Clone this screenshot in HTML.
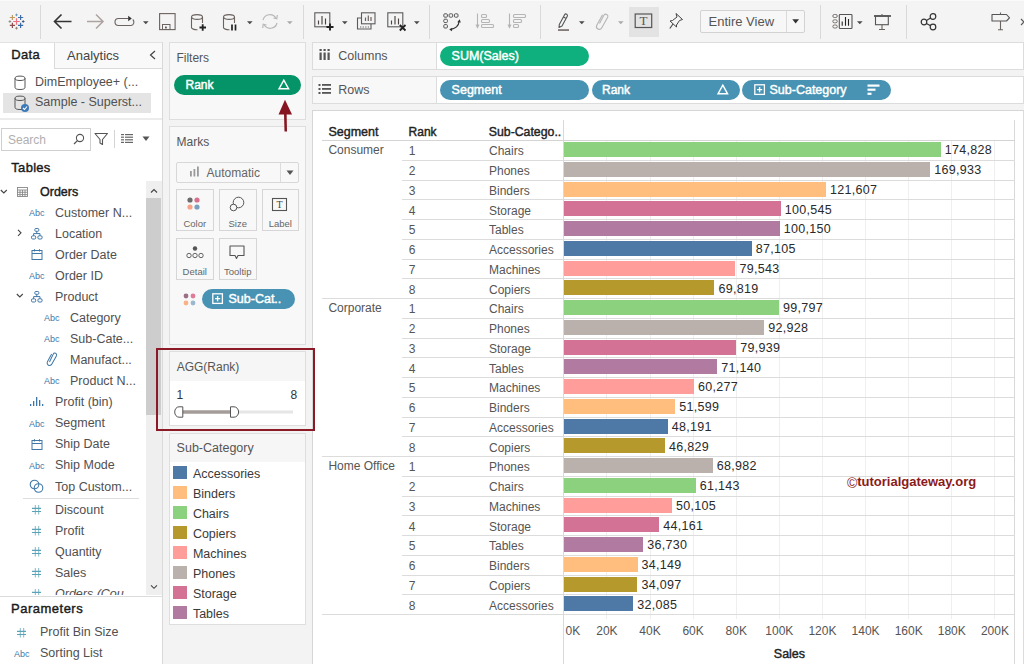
<!DOCTYPE html>
<html><head><meta charset="utf-8"><style>
html,body{margin:0;padding:0;}
body{width:1024px;height:664px;overflow:hidden;position:relative;background:#f3f3f3;font-family:"Liberation Sans", sans-serif;}
.t{position:absolute;white-space:nowrap;line-height:1;}
.b{position:absolute;box-sizing:border-box;}
svg.b{overflow:visible;}
</style></head><body>
<div class="b" style="left:0px;top:0px;width:1024px;height:42px;background:#f4f4f4;"></div>
<div class="b" style="left:0px;top:0px;width:1024px;height:1px;background:#fafafa;"></div>
<div class="b" style="left:40px;top:5px;width:1px;height:34px;background:#d9d9d9;"></div>
<div class="b" style="left:303px;top:5px;width:1px;height:34px;background:#d9d9d9;"></div>
<div class="b" style="left:429px;top:5px;width:1px;height:34px;background:#d9d9d9;"></div>
<div class="b" style="left:540px;top:5px;width:1px;height:34px;background:#d9d9d9;"></div>
<div class="b" style="left:820px;top:5px;width:1px;height:34px;background:#d9d9d9;"></div>
<div class="b" style="left:906px;top:5px;width:1px;height:34px;background:#d9d9d9;"></div>
<svg class="b" style="left:0px;top:0px;" width="34" height="42" viewBox="0 0 34 42"><path d="M13.2 21.5 H19.8 M16.5 18.2 V24.8" stroke="#ee6f7f" stroke-width="1.2"/><path d="M9.8 17.5 H15.0 M12.4 14.9 V20.1" stroke="#bf9a62" stroke-width="1.2"/><path d="M18.0 17.5 H23.200000000000003 M20.6 14.9 V20.1" stroke="#3f6fa3" stroke-width="1.2"/><path d="M9.8 25.4 H15.0 M12.4 22.799999999999997 V28.0" stroke="#8d4e4a" stroke-width="1.2"/><path d="M18.0 25.4 H23.200000000000003 M20.6 22.799999999999997 V28.0" stroke="#3a6aa5" stroke-width="1.2"/><path d="M15.2 14.9 H17.8 M16.5 13.6 V16.2" stroke="#6f9fc0" stroke-width="1"/><path d="M15.2 28.2 H17.8 M16.5 26.9 V29.5" stroke="#8f8580" stroke-width="1"/><path d="M8.6 21.5 H11.200000000000001 M9.9 20.2 V22.8" stroke="#8f8a88" stroke-width="1"/><path d="M21.9 21.5 H24.5 M23.2 20.2 V22.8" stroke="#3f5a80" stroke-width="1"/></svg>
<svg class="b" style="left:52px;top:12px;" width="22" height="19" viewBox="0 0 22 19"><path d="M19.5 9.5 H3 M9.5 2.5 L2.5 9.5 L9.5 16.5" fill="none" stroke="#333" stroke-width="1.6"/></svg>
<svg class="b" style="left:85px;top:12px;" width="22" height="19" viewBox="0 0 22 19"><path d="M2 9.5 H17.5 M11 2.5 L18 9.5 L11 16.5" fill="none" stroke="#aca3a0" stroke-width="1.5"/></svg>
<svg class="b" style="left:113px;top:14px;" width="24" height="13" viewBox="0 0 24 13"><path d="M15.5 4.5 H5.5 a3.5 3.5 0 0 0 0 7 H18 a3.5 3.5 0 0 0 1.8 -6" fill="none" stroke="#6b6360" stroke-width="1.1"/><path d="M15.2 1.8 L18.8 4.5 L15.2 7.2 Z" fill="#333"/></svg>
<svg class="b" style="left:143px;top:20.5px;" width="7" height="5" viewBox="0 0 7 5"><path d="M0 0.3 H5.6 L2.8 3.3 Z" fill="#4a4a4a"/></svg>
<svg class="b" style="left:158px;top:12px;" width="20" height="20" viewBox="0 0 20 20"><rect x="1.6" y="1.6" width="15.5" height="16" fill="none" stroke="#6b6360" stroke-width="1.1"/><rect x="4.5" y="12.5" width="7.5" height="5" fill="none" stroke="#6b6360" stroke-width="1"/><rect x="7" y="14.6" width="1.8" height="1.8" fill="#555"/></svg>
<svg class="b" style="left:190px;top:13px;" width="18" height="19" viewBox="0 0 18 19"><path d="M1.5 4 V14.5 a5.5 2.2 0 0 0 6 2.2" fill="none" stroke="#6b6360" stroke-width="1.1"/><path d="M12.5 4 V10" fill="none" stroke="#6b6360" stroke-width="1.1"/><ellipse cx="7" cy="4" rx="5.5" ry="2.4" fill="none" stroke="#6b6360" stroke-width="1.1"/><path d="M9.5 14.5 H16 M12.7 11.2 V17.8" stroke="#222" stroke-width="1.8"/></svg>
<svg class="b" style="left:222px;top:13px;" width="18" height="19" viewBox="0 0 18 19"><path d="M1.5 4 V14.5 a5.5 2.2 0 0 0 6 2.2" fill="none" stroke="#6b6360" stroke-width="1.1"/><path d="M12.5 4 V10" fill="none" stroke="#6b6360" stroke-width="1.1"/><ellipse cx="7" cy="4" rx="5.5" ry="2.4" fill="none" stroke="#6b6360" stroke-width="1.1"/><path d="M10 11.5 V17.5 M13.5 11.5 V17.5" stroke="#222" stroke-width="1.7"/></svg>
<svg class="b" style="left:247px;top:20.5px;" width="7" height="5" viewBox="0 0 7 5"><path d="M0 0.3 H5.6 L2.8 3.3 Z" fill="#4a4a4a"/></svg>
<svg class="b" style="left:260px;top:12px;" width="20" height="19" viewBox="0 0 20 19"><path d="M3 8 a7 7 0 0 1 13 -1.5 M17 11 a7 7 0 0 1 -13 1.5" fill="none" stroke="#b8b8b8" stroke-width="1.2"/><path d="M13.5 6 L16.8 6.8 L17.3 3" fill="none" stroke="#b8b8b8" stroke-width="1.2"/><path d="M6.5 13 L3.2 12.2 L2.7 16" fill="none" stroke="#b8b8b8" stroke-width="1.2"/></svg>
<svg class="b" style="left:287px;top:20.5px;" width="7" height="5" viewBox="0 0 7 5"><path d="M0 0.3 H5.6 L2.8 3.3 Z" fill="#aaa"/></svg>
<svg class="b" style="left:314px;top:12px;" width="22" height="20" viewBox="0 0 22 20"><rect x="0.8" y="0.8" width="15" height="14" fill="none" stroke="#5b5b5b" stroke-width="1.1"/><path d="M4.5 12.5 V8.5 M8 12.5 V4 M11.5 12.5 V6.5" stroke="#4a4442" stroke-width="1.15"/><path d="M12.5 15 H19.5 M16 11.5 V18.5" stroke="#222" stroke-width="1.9"/></svg>
<svg class="b" style="left:342px;top:20.5px;" width="7" height="5" viewBox="0 0 7 5"><path d="M0 0.3 H5.6 L2.8 3.3 Z" fill="#4a4a4a"/></svg>
<svg class="b" style="left:356px;top:12px;" width="22" height="20" viewBox="0 0 22 20"><rect x="5.5" y="0.8" width="13.5" height="11" fill="#f3f3f3" stroke="#5b5b5b" stroke-width="1.1"/><path d="M9.5 9 V5.5 M12.3 9 V3.5 M15 9 V5" stroke="#6b6360" stroke-width="1.2"/><path d="M5.5 6 H1.5 V17 H15 V12" fill="none" stroke="#5b5b5b" stroke-width="1.1"/><path d="M4 15 H13" stroke="#6b6360" stroke-width="1.1" stroke-dasharray="1.3 1.3"/></svg>
<svg class="b" style="left:387px;top:12px;" width="22" height="20" viewBox="0 0 22 20"><rect x="0.8" y="0.8" width="15" height="14" fill="none" stroke="#5b5b5b" stroke-width="1.1"/><path d="M4.5 12.5 V8.5 M8 12.5 V4 M11.5 12.5 V6.5" stroke="#4a4442" stroke-width="1.15"/><path d="M12.8 13 L18.5 18.5 M18.5 13 L12.8 18.5" stroke="#222" stroke-width="1.8"/></svg>
<svg class="b" style="left:414px;top:20.5px;" width="7" height="5" viewBox="0 0 7 5"><path d="M0 0.3 H5.6 L2.8 3.3 Z" fill="#4a4a4a"/></svg>
<svg class="b" style="left:442px;top:12px;" width="20" height="20" viewBox="0 0 20 20"><g fill="none" stroke="#555" stroke-width="1"><rect x="1.8" y="1.8" width="3.6" height="3.4" rx="1"/><rect x="7.1" y="1.8" width="3.6" height="3.4" rx="1"/><rect x="12.4" y="1.8" width="3.6" height="3.4" rx="1"/><rect x="1.8" y="7.2" width="3.6" height="3.4" rx="1"/><rect x="1.8" y="12.6" width="3.6" height="3.4" rx="1"/></g><path d="M17 9.5 a9 8 0 0 1 -8.5 7.8" fill="none" stroke="#333" stroke-width="1.2"/><path d="M15.3 10.2 L17.6 7.3 L18.8 10.6 Z" fill="#333"/><path d="M10.3 15.8 L7.2 17.6 L10 19.3 Z" fill="#333"/></svg>
<svg class="b" style="left:476px;top:13px;" width="20" height="17" viewBox="0 0 20 17"><g fill="none" stroke="#b5b5b5" stroke-width="1.1"><path d="M1.5 0.5 V14 M0 11.5 L1.5 14.5 L3 11.5"/><rect x="5.5" y="1.5" width="5" height="3" rx="1"/><rect x="5.5" y="6.5" width="8" height="3" rx="1"/><rect x="5.5" y="11.5" width="12" height="3" rx="1"/></g></svg>
<svg class="b" style="left:508px;top:13px;" width="20" height="17" viewBox="0 0 20 17"><g fill="none" stroke="#b5b5b5" stroke-width="1.1"><path d="M1.5 0.5 V14 M0 11.5 L1.5 14.5 L3 11.5"/><rect x="5.5" y="1.5" width="12" height="3" rx="1"/><rect x="5.5" y="6.5" width="8" height="3" rx="1"/><rect x="5.5" y="11.5" width="5" height="3" rx="1"/></g></svg>
<svg class="b" style="left:556px;top:12px;" width="16" height="20" viewBox="0 0 16 20"><path d="M3.3 12.5 L8.6 2.8 a1.5 1.5 0 0 1 2.7 1.4 L6 14 L3 15.5 Z M7.5 5 L10.2 6.4" fill="none" stroke="#555" stroke-width="1.1" stroke-linejoin="round"/><rect x="2" y="17.2" width="11" height="1.7" fill="#7a706c"/></svg>
<svg class="b" style="left:579px;top:20.5px;" width="7" height="5" viewBox="0 0 7 5"><path d="M0 0.3 H5.6 L2.8 3.3 Z" fill="#4a4a4a"/></svg>
<svg class="b" style="left:595px;top:12px;" width="16" height="19" viewBox="0 0 16 19"><path d="M4.5 11.5 L9 3 a2.2 2.2 0 0 1 3.8 2 L6.8 15.8 a2.8 2.8 0 0 1 -5 -2.6 L7.5 2.8" fill="none" stroke="#b5b5b5" stroke-width="1.1"/></svg>
<svg class="b" style="left:618px;top:20.5px;" width="7" height="5" viewBox="0 0 7 5"><path d="M0 0.3 H5.6 L2.8 3.3 Z" fill="#aaa"/></svg>
<div class="b" style="left:629px;top:7px;width:30px;height:30px;background:#e3e3e3;"></div>
<svg class="b" style="left:634px;top:13px;" width="20" height="16" viewBox="0 0 20 16"><rect x="1.2" y="1" width="16.5" height="13.5" fill="none" stroke="#555" stroke-width="1.2"/><text x="9.5" y="12.3" font-family="Liberation Serif" font-size="13" text-anchor="middle" fill="#555">T</text></svg>
<svg class="b" style="left:668px;top:12px;" width="16" height="19" viewBox="0 0 16 19"><path d="M8 1.5 L14.5 7.5 L11.5 8.5 L8.5 13 L8.5 15 L2 9 L4.5 8.5 L9 5 Z" fill="none" stroke="#444" stroke-width="1" stroke-linejoin="round"/><path d="M5 12 L1.8 16.5" stroke="#444" stroke-width="1.1"/></svg>
<div class="b" style="left:700px;top:9.5px;width:105px;height:23.5px;background:#f7f7f7;border:1px solid #d2d2d2;border-radius:2px;"></div>
<div class="b" style="left:786px;top:10.5px;width:1px;height:21.5px;background:#dadada;"></div>
<div class="t" style="left:708.50px;top:14.70px;font-size:13px;color:#555;">Entire View</div>
<svg class="b" style="left:791.5px;top:19px;" width="8" height="5" viewBox="0 0 8 5"><path d="M0.3 0.3 H7 L3.65 4.5 Z" fill="#333"/></svg>
<svg class="b" style="left:831px;top:13px;" width="23" height="17" viewBox="0 0 23 17"><g fill="none" stroke="#6b6360" stroke-width="0.9"><rect x="1.8" y="1.5" width="4.5" height="3" rx="1.5"/><rect x="1.8" y="6.8" width="4.5" height="3" rx="1.5"/><rect x="1.8" y="12" width="4.5" height="3" rx="1.5"/><rect x="8.3" y="1.5" width="12.7" height="14" rx="0.8" stroke="#555" stroke-width="1.1"/></g><path d="M11.2 12.8 V8.5 M14.5 12.8 V4 M17.5 12.8 V6" stroke="#222" stroke-width="1.1"/></svg>
<svg class="b" style="left:857px;top:20.5px;" width="7" height="5" viewBox="0 0 7 5"><path d="M0 0.3 H5.6 L2.8 3.3 Z" fill="#4a4a4a"/></svg>
<svg class="b" style="left:873px;top:12px;" width="20" height="20" viewBox="0 0 20 20"><path d="M1 4 H18" stroke="#444" stroke-width="1.6"/><rect x="2.5" y="4" width="12.8" height="8.7" fill="none" stroke="#555" stroke-width="1.1"/><path d="M9 2 V4 M9 12.7 V17 M6 17.5 H12" stroke="#6b6360" stroke-width="1.1"/></svg>
<svg class="b" style="left:920px;top:12px;" width="18" height="19" viewBox="0 0 18 19"><g fill="none" stroke="#333" stroke-width="1.2"><circle cx="13" cy="4.5" r="2.8"/><circle cx="4" cy="10" r="2.8"/><circle cx="13" cy="15" r="2.8"/><path d="M6.4 8.5 L10.6 6 M6.4 11.5 L10.6 13.7"/></g></svg>
<svg class="b" style="left:990px;top:11px;" width="22" height="21" viewBox="0 0 22 21"><path d="M2 3.5 H16.5 L19.5 6.8 L16.5 10 H2 Z" fill="none" stroke="#555" stroke-width="1.1" stroke-linejoin="round"/><path d="M10.5 1.5 V3.5 M10.5 10 V18.5 M8 18.8 H13" stroke="#6b6360" stroke-width="1.1"/></svg>
<svg class="b" style="left:1019px;top:18px;" width="6" height="8" viewBox="0 0 6 8"><path d="M2 1 L5 4 L2 7" fill="none" stroke="#555" stroke-width="1.1"/></svg>
<div class="b" style="left:312px;top:110px;width:712px;height:554px;background:#fff;border-left:1px solid #d6d6d6;border-top:1px solid #d6d6d6;border-right:1px solid #dcdcdc;"></div>
<div class="b" style="left:606px;top:141px;width:1px;height:478px;background:#efefef;"></div>
<div class="b" style="left:650px;top:141px;width:1px;height:478px;background:#efefef;"></div>
<div class="b" style="left:693px;top:141px;width:1px;height:478px;background:#efefef;"></div>
<div class="b" style="left:736px;top:141px;width:1px;height:478px;background:#efefef;"></div>
<div class="b" style="left:779px;top:141px;width:1px;height:478px;background:#efefef;"></div>
<div class="b" style="left:822px;top:141px;width:1px;height:478px;background:#efefef;"></div>
<div class="b" style="left:865px;top:141px;width:1px;height:478px;background:#efefef;"></div>
<div class="b" style="left:908px;top:141px;width:1px;height:478px;background:#efefef;"></div>
<div class="b" style="left:951px;top:141px;width:1px;height:478px;background:#efefef;"></div>
<div class="b" style="left:994px;top:141px;width:1px;height:478px;background:#efefef;"></div>
<div class="b" style="left:563px;top:120px;width:1px;height:544px;background:#d9d9d9;"></div>
<div class="b" style="left:1014px;top:120px;width:1px;height:544px;background:#d9d9d9;"></div>
<div class="b" style="left:322px;top:140px;width:693px;height:1px;background:#d4d4d4;"></div>
<div class="t" style="left:328.40px;top:126.37px;font-size:12.5px;color:#222;-webkit-text-stroke:0.4px #222;">Segment</div>
<div class="t" style="left:408.60px;top:126.43px;font-size:12px;color:#222;-webkit-text-stroke:0.4px #222;">Rank</div>
<div class="t" style="left:488.75px;top:126.39px;font-size:12.3px;color:#222;-webkit-text-stroke:0.4px #222;">Sub-Catego..</div>
<div class="t" style="left:328.40px;top:144.33px;font-size:12px;color:#555;">Consumer</div>
<div class="t" style="left:408.75px;top:145.33px;font-size:12px;color:#555;">1</div>
<div class="t" style="left:489.00px;top:145.33px;font-size:12px;color:#555;">Chairs</div>
<div class="b" style="left:564.0px;top:142.20px;width:376.75px;height:14.9px;background:#8cd17d;"></div>
<div class="t" style="left:944.75px;top:144.27px;font-size:12.5px;color:#2a2a2a;letter-spacing:0.3px;">174,828</div>
<div class="b" style="left:402px;top:160px;width:613px;height:1px;background:#dcdcdc;"></div>
<div class="t" style="left:408.75px;top:165.08px;font-size:12px;color:#555;">2</div>
<div class="t" style="left:489.00px;top:165.08px;font-size:12px;color:#555;">Phones</div>
<div class="b" style="left:564.0px;top:161.95px;width:366.21px;height:14.9px;background:#bab0ac;"></div>
<div class="t" style="left:934.21px;top:164.02px;font-size:12.5px;color:#2a2a2a;letter-spacing:0.3px;">169,933</div>
<div class="b" style="left:402px;top:180px;width:613px;height:1px;background:#dcdcdc;"></div>
<div class="t" style="left:408.75px;top:184.83px;font-size:12px;color:#555;">3</div>
<div class="t" style="left:489.00px;top:184.83px;font-size:12px;color:#555;">Binders</div>
<div class="b" style="left:564.0px;top:181.70px;width:262.06px;height:14.9px;background:#ffbe7d;"></div>
<div class="t" style="left:830.06px;top:183.77px;font-size:12.5px;color:#2a2a2a;letter-spacing:0.3px;">121,607</div>
<div class="b" style="left:402px;top:199px;width:613px;height:1px;background:#dcdcdc;"></div>
<div class="t" style="left:408.75px;top:204.58px;font-size:12px;color:#555;">4</div>
<div class="t" style="left:489.00px;top:204.58px;font-size:12px;color:#555;">Storage</div>
<div class="b" style="left:564.0px;top:201.45px;width:216.67px;height:14.9px;background:#d37295;"></div>
<div class="t" style="left:784.67px;top:203.52px;font-size:12.5px;color:#2a2a2a;letter-spacing:0.3px;">100,545</div>
<div class="b" style="left:402px;top:219px;width:613px;height:1px;background:#dcdcdc;"></div>
<div class="t" style="left:408.75px;top:224.33px;font-size:12px;color:#555;">5</div>
<div class="t" style="left:489.00px;top:224.33px;font-size:12px;color:#555;">Tables</div>
<div class="b" style="left:564.0px;top:221.20px;width:215.82px;height:14.9px;background:#b07aa1;"></div>
<div class="t" style="left:783.82px;top:223.27px;font-size:12.5px;color:#2a2a2a;letter-spacing:0.3px;">100,150</div>
<div class="b" style="left:402px;top:239px;width:613px;height:1px;background:#dcdcdc;"></div>
<div class="t" style="left:408.75px;top:244.08px;font-size:12px;color:#555;">6</div>
<div class="t" style="left:489.00px;top:244.08px;font-size:12px;color:#555;">Accessories</div>
<div class="b" style="left:564.0px;top:240.95px;width:187.71px;height:14.9px;background:#4e79a7;"></div>
<div class="t" style="left:755.71px;top:243.02px;font-size:12.5px;color:#2a2a2a;letter-spacing:0.3px;">87,105</div>
<div class="b" style="left:402px;top:259px;width:613px;height:1px;background:#dcdcdc;"></div>
<div class="t" style="left:408.75px;top:263.83px;font-size:12px;color:#555;">7</div>
<div class="t" style="left:489.00px;top:263.83px;font-size:12px;color:#555;">Machines</div>
<div class="b" style="left:564.0px;top:260.70px;width:171.42px;height:14.9px;background:#ff9d9a;"></div>
<div class="t" style="left:739.42px;top:262.77px;font-size:12.5px;color:#2a2a2a;letter-spacing:0.3px;">79,543</div>
<div class="b" style="left:402px;top:278px;width:613px;height:1px;background:#dcdcdc;"></div>
<div class="t" style="left:408.75px;top:283.58px;font-size:12px;color:#555;">8</div>
<div class="t" style="left:489.00px;top:283.58px;font-size:12px;color:#555;">Copiers</div>
<div class="b" style="left:564.0px;top:280.45px;width:150.46px;height:14.9px;background:#b6992d;"></div>
<div class="t" style="left:718.46px;top:282.52px;font-size:12.5px;color:#2a2a2a;letter-spacing:0.3px;">69,819</div>
<div class="b" style="left:322px;top:298px;width:693px;height:1px;background:#dcdcdc;"></div>
<div class="t" style="left:328.40px;top:302.33px;font-size:12px;color:#555;">Corporate</div>
<div class="t" style="left:408.75px;top:303.33px;font-size:12px;color:#555;">1</div>
<div class="t" style="left:489.00px;top:303.33px;font-size:12px;color:#555;">Chairs</div>
<div class="b" style="left:564.0px;top:300.20px;width:215.06px;height:14.9px;background:#8cd17d;"></div>
<div class="t" style="left:783.06px;top:302.27px;font-size:12.5px;color:#2a2a2a;letter-spacing:0.3px;">99,797</div>
<div class="b" style="left:402px;top:318px;width:613px;height:1px;background:#dcdcdc;"></div>
<div class="t" style="left:408.75px;top:323.08px;font-size:12px;color:#555;">2</div>
<div class="t" style="left:489.00px;top:323.08px;font-size:12px;color:#555;">Phones</div>
<div class="b" style="left:564.0px;top:319.95px;width:200.26px;height:14.9px;background:#bab0ac;"></div>
<div class="t" style="left:768.26px;top:322.02px;font-size:12.5px;color:#2a2a2a;letter-spacing:0.3px;">92,928</div>
<div class="b" style="left:402px;top:338px;width:613px;height:1px;background:#dcdcdc;"></div>
<div class="t" style="left:408.75px;top:342.83px;font-size:12px;color:#555;">3</div>
<div class="t" style="left:489.00px;top:342.83px;font-size:12px;color:#555;">Storage</div>
<div class="b" style="left:564.0px;top:339.70px;width:172.27px;height:14.9px;background:#d37295;"></div>
<div class="t" style="left:740.27px;top:341.77px;font-size:12.5px;color:#2a2a2a;letter-spacing:0.3px;">79,939</div>
<div class="b" style="left:402px;top:357px;width:613px;height:1px;background:#dcdcdc;"></div>
<div class="t" style="left:408.75px;top:362.58px;font-size:12px;color:#555;">4</div>
<div class="t" style="left:489.00px;top:362.58px;font-size:12px;color:#555;">Tables</div>
<div class="b" style="left:564.0px;top:359.45px;width:153.31px;height:14.9px;background:#b07aa1;"></div>
<div class="t" style="left:721.31px;top:361.52px;font-size:12.5px;color:#2a2a2a;letter-spacing:0.3px;">71,140</div>
<div class="b" style="left:402px;top:377px;width:613px;height:1px;background:#dcdcdc;"></div>
<div class="t" style="left:408.75px;top:382.33px;font-size:12px;color:#555;">5</div>
<div class="t" style="left:489.00px;top:382.33px;font-size:12px;color:#555;">Machines</div>
<div class="b" style="left:564.0px;top:379.20px;width:129.90px;height:14.9px;background:#ff9d9a;"></div>
<div class="t" style="left:697.90px;top:381.27px;font-size:12.5px;color:#2a2a2a;letter-spacing:0.3px;">60,277</div>
<div class="b" style="left:402px;top:397px;width:613px;height:1px;background:#dcdcdc;"></div>
<div class="t" style="left:408.75px;top:402.08px;font-size:12px;color:#555;">6</div>
<div class="t" style="left:489.00px;top:402.08px;font-size:12px;color:#555;">Binders</div>
<div class="b" style="left:564.0px;top:398.95px;width:111.20px;height:14.9px;background:#ffbe7d;"></div>
<div class="t" style="left:679.20px;top:401.02px;font-size:12.5px;color:#2a2a2a;letter-spacing:0.3px;">51,599</div>
<div class="b" style="left:402px;top:417px;width:613px;height:1px;background:#dcdcdc;"></div>
<div class="t" style="left:408.75px;top:421.83px;font-size:12px;color:#555;">7</div>
<div class="t" style="left:489.00px;top:421.83px;font-size:12px;color:#555;">Accessories</div>
<div class="b" style="left:564.0px;top:418.70px;width:103.85px;height:14.9px;background:#4e79a7;"></div>
<div class="t" style="left:671.85px;top:420.77px;font-size:12.5px;color:#2a2a2a;letter-spacing:0.3px;">48,191</div>
<div class="b" style="left:402px;top:436px;width:613px;height:1px;background:#dcdcdc;"></div>
<div class="t" style="left:408.75px;top:441.58px;font-size:12px;color:#555;">8</div>
<div class="t" style="left:489.00px;top:441.58px;font-size:12px;color:#555;">Copiers</div>
<div class="b" style="left:564.0px;top:438.45px;width:100.92px;height:14.9px;background:#b6992d;"></div>
<div class="t" style="left:668.92px;top:440.52px;font-size:12.5px;color:#2a2a2a;letter-spacing:0.3px;">46,829</div>
<div class="b" style="left:322px;top:456px;width:693px;height:1px;background:#dcdcdc;"></div>
<div class="t" style="left:328.40px;top:460.33px;font-size:12px;color:#555;">Home Office</div>
<div class="t" style="left:408.75px;top:461.33px;font-size:12px;color:#555;">1</div>
<div class="t" style="left:489.00px;top:461.33px;font-size:12px;color:#555;">Phones</div>
<div class="b" style="left:564.0px;top:458.20px;width:148.66px;height:14.9px;background:#bab0ac;"></div>
<div class="t" style="left:716.66px;top:460.27px;font-size:12.5px;color:#2a2a2a;letter-spacing:0.3px;">68,982</div>
<div class="b" style="left:402px;top:476px;width:613px;height:1px;background:#dcdcdc;"></div>
<div class="t" style="left:408.75px;top:481.08px;font-size:12px;color:#555;">2</div>
<div class="t" style="left:489.00px;top:481.08px;font-size:12px;color:#555;">Chairs</div>
<div class="b" style="left:564.0px;top:477.95px;width:131.76px;height:14.9px;background:#8cd17d;"></div>
<div class="t" style="left:699.76px;top:480.02px;font-size:12.5px;color:#2a2a2a;letter-spacing:0.3px;">61,143</div>
<div class="b" style="left:402px;top:496px;width:613px;height:1px;background:#dcdcdc;"></div>
<div class="t" style="left:408.75px;top:500.83px;font-size:12px;color:#555;">3</div>
<div class="t" style="left:489.00px;top:500.83px;font-size:12px;color:#555;">Machines</div>
<div class="b" style="left:564.0px;top:497.70px;width:107.98px;height:14.9px;background:#ff9d9a;"></div>
<div class="t" style="left:675.98px;top:499.77px;font-size:12.5px;color:#2a2a2a;letter-spacing:0.3px;">50,105</div>
<div class="b" style="left:402px;top:515px;width:613px;height:1px;background:#dcdcdc;"></div>
<div class="t" style="left:408.75px;top:520.58px;font-size:12px;color:#555;">4</div>
<div class="t" style="left:489.00px;top:520.58px;font-size:12px;color:#555;">Storage</div>
<div class="b" style="left:564.0px;top:517.45px;width:95.17px;height:14.9px;background:#d37295;"></div>
<div class="t" style="left:663.17px;top:519.52px;font-size:12.5px;color:#2a2a2a;letter-spacing:0.3px;">44,161</div>
<div class="b" style="left:402px;top:535px;width:613px;height:1px;background:#dcdcdc;"></div>
<div class="t" style="left:408.75px;top:540.33px;font-size:12px;color:#555;">5</div>
<div class="t" style="left:489.00px;top:540.33px;font-size:12px;color:#555;">Tables</div>
<div class="b" style="left:564.0px;top:537.20px;width:79.15px;height:14.9px;background:#b07aa1;"></div>
<div class="t" style="left:647.15px;top:539.27px;font-size:12.5px;color:#2a2a2a;letter-spacing:0.3px;">36,730</div>
<div class="b" style="left:402px;top:555px;width:613px;height:1px;background:#dcdcdc;"></div>
<div class="t" style="left:408.75px;top:560.08px;font-size:12px;color:#555;">6</div>
<div class="t" style="left:489.00px;top:560.08px;font-size:12px;color:#555;">Binders</div>
<div class="b" style="left:564.0px;top:556.95px;width:73.59px;height:14.9px;background:#ffbe7d;"></div>
<div class="t" style="left:641.59px;top:559.02px;font-size:12.5px;color:#2a2a2a;letter-spacing:0.3px;">34,149</div>
<div class="b" style="left:402px;top:575px;width:613px;height:1px;background:#dcdcdc;"></div>
<div class="t" style="left:408.75px;top:579.83px;font-size:12px;color:#555;">7</div>
<div class="t" style="left:489.00px;top:579.83px;font-size:12px;color:#555;">Copiers</div>
<div class="b" style="left:564.0px;top:576.70px;width:73.48px;height:14.9px;background:#b6992d;"></div>
<div class="t" style="left:641.48px;top:578.77px;font-size:12.5px;color:#2a2a2a;letter-spacing:0.3px;">34,097</div>
<div class="b" style="left:402px;top:594px;width:613px;height:1px;background:#dcdcdc;"></div>
<div class="t" style="left:408.75px;top:599.58px;font-size:12px;color:#555;">8</div>
<div class="t" style="left:489.00px;top:599.58px;font-size:12px;color:#555;">Accessories</div>
<div class="b" style="left:564.0px;top:596.45px;width:69.14px;height:14.9px;background:#4e79a7;"></div>
<div class="t" style="left:637.14px;top:598.52px;font-size:12.5px;color:#2a2a2a;letter-spacing:0.3px;">32,085</div>
<div class="b" style="left:322px;top:614px;width:693px;height:1px;background:#dcdcdc;"></div>
<div class="t" style="left:565.60px;top:625.03px;font-size:12px;color:#555;">0K</div>
<div class="t" style="left:406.91px;width:400px;text-align:center;top:625.03px;font-size:12px;color:#555;">20K</div>
<div class="t" style="left:450.02px;width:400px;text-align:center;top:625.03px;font-size:12px;color:#555;">40K</div>
<div class="t" style="left:493.13px;width:400px;text-align:center;top:625.03px;font-size:12px;color:#555;">60K</div>
<div class="t" style="left:536.24px;width:400px;text-align:center;top:625.03px;font-size:12px;color:#555;">80K</div>
<div class="t" style="left:579.35px;width:400px;text-align:center;top:625.03px;font-size:12px;color:#555;">100K</div>
<div class="t" style="left:622.46px;width:400px;text-align:center;top:625.03px;font-size:12px;color:#555;">120K</div>
<div class="t" style="left:665.57px;width:400px;text-align:center;top:625.03px;font-size:12px;color:#555;">140K</div>
<div class="t" style="left:708.68px;width:400px;text-align:center;top:625.03px;font-size:12px;color:#555;">160K</div>
<div class="t" style="left:751.79px;width:400px;text-align:center;top:625.03px;font-size:12px;color:#555;">180K</div>
<div class="t" style="left:794.90px;width:400px;text-align:center;top:625.03px;font-size:12px;color:#555;">200K</div>
<div class="t" style="left:773.80px;top:648.07px;font-size:12.5px;color:#222;-webkit-text-stroke:0.4px #222;">Sales</div>
<div class="t" style="left:846.90px;top:474.30px;font-size:13px;color:#8b1a1a;font-weight:bold;"><span style="font-weight:normal;font-size:14px;position:relative;top:1.5px;">&copy;</span>tutorialgateway.org</div>
<div class="b" style="left:0px;top:42px;width:163px;height:622px;background:#fff;border-right:1px solid #d9d9d9;"></div>
<div class="b" style="left:54px;top:42px;width:108px;height:27px;background:#f9f9f9;border-left:1px solid #dadada;border-bottom:1px solid #dadada;"></div>
<div class="b" style="left:0px;top:42px;width:162px;height:1px;background:#e2e2e2;"></div>
<div class="t" style="left:11.30px;top:48.30px;font-size:13px;color:#1a1a1a;-webkit-text-stroke:0.4px #1a1a1a;letter-spacing:0.3px;">Data</div>
<div class="t" style="left:67.00px;top:49.00px;font-size:13px;color:#444;">Analytics</div>
<svg class="b" style="left:149px;top:50px;" width="8" height="10" viewBox="0 0 8 10"><path d="M6 1 L1.5 5 L6 9" fill="none" stroke="#444" stroke-width="1.2"/></svg>
<svg class="b" style="left:0px;top:0px;" width="1" height="1" viewBox="0 0 1 1"></svg>
<svg class="b" style="left:14px;top:75px;" width="14" height="17" viewBox="0 0 14 17"><path d="M1.0 3.3 v9 a5 2.2 0 0 0 10 0 v-9" fill="none" stroke="#555" stroke-width="1"/><ellipse cx="6.0" cy="3.3" rx="5" ry="2.2" fill="none" stroke="#555" stroke-width="1"/></svg>
<div class="t" style="left:35.00px;top:76.37px;font-size:12.5px;color:#505050;">DimEmployee+ (...</div>
<div class="b" style="left:3px;top:93px;width:148px;height:20px;background:#e4e4e4;"></div>
<svg class="b" style="left:14px;top:95px;" width="16" height="18" viewBox="0 0 16 18"><path d="M1.0 3.3 v9 a5 2.2 0 0 0 10 0 v-9" fill="none" stroke="#555" stroke-width="1"/><ellipse cx="6.0" cy="3.3" rx="5" ry="2.2" fill="none" stroke="#555" stroke-width="1"/><circle cx="11" cy="13" r="4" fill="#3d7ab8"/><path d="M9 13 l1.5 1.5 l2.5 -3" fill="none" stroke="#fff" stroke-width="1.1"/></svg>
<div class="t" style="left:35.00px;top:95.87px;font-size:12.5px;color:#505050;">Sample - Superst...</div>
<div class="b" style="left:0px;top:118px;width:162px;height:2px;background:#ececec;"></div>
<div class="b" style="left:1px;top:128px;width:90px;height:23px;background:#fff;border:1px solid #cfcfcf;"></div>
<div class="t" style="left:8.00px;top:134.43px;font-size:12px;color:#b0b0b0;">Search</div>
<svg class="b" style="left:73px;top:133px;" width="12" height="13" viewBox="0 0 12 13"><circle cx="7" cy="5" r="3.6" fill="none" stroke="#555" stroke-width="1.1"/><path d="M4.4 7.6 L1 11" stroke="#555" stroke-width="1.3"/></svg>
<svg class="b" style="left:94px;top:132px;" width="15" height="14" viewBox="0 0 15 14"><path d="M1 1.5 H13.5 L8.5 7.5 V12.5 L6 11 V7.5 Z" fill="none" stroke="#555" stroke-width="1.1" stroke-linejoin="round"/></svg>
<div class="b" style="left:114px;top:130px;width:1px;height:18px;background:#d4d4d4;"></div>
<svg class="b" style="left:120px;top:133px;" width="14" height="11" viewBox="0 0 14 11"><rect x="1" y="1.0" width="12" height="1.2" fill="#666"/><rect x="1" y="3.6" width="12" height="1.2" fill="#666"/><rect x="1" y="6.2" width="12" height="1.2" fill="#666"/><rect x="1" y="8.8" width="12" height="1.2" fill="#666"/><rect x="4" y="0.5" width="1" height="10" fill="#fff"/></svg>
<svg class="b" style="left:142px;top:136px;" width="9" height="6" viewBox="0 0 9 6"><path d="M0.5 0.5 H7.5 L4 5 Z" fill="#555"/></svg>
<div class="t" style="left:11.30px;top:160.80px;font-size:13px;color:#1a1a1a;-webkit-text-stroke:0.4px #1a1a1a;letter-spacing:0.3px;">Tables</div>
<div class="b" style="left:0;top:181px;width:146px;height:414px;overflow:hidden;">
<svg class="b" style="left:0px;top:8px;overflow:visible" width="8" height="6" viewBox="0 0 8 6"><path d="M0.8 1 L3.8 4 L6.8 1" fill="none" stroke="#444" stroke-width="1.1"/></svg>
<svg class="b" style="left:16.5px;top:6px;overflow:visible" width="12" height="11" viewBox="0 0 12 11"><g fill="none" stroke="#888" stroke-width="0.9"><rect x="0.5" y="0.5" width="10" height="9"/><path d="M0.5 3 H10.5 M0.5 5.3 H10.5 M0.5 7.6 H10.5 M3 3 V9.5 M5.5 3 V9.5 M8 3 V9.5"/></g></svg>
<div class="t" style="left:40.00px;top:4.87px;font-size:12.5px;color:#1a1a1a;-webkit-text-stroke:0.4px #1a1a1a;">Orders</div>
<div class="t" style="left:29.00px;top:28.30px;font-size:9px;color:#3f78a8;">Abc</div>
<div class="t" style="left:55.00px;top:25.87px;font-size:12.5px;color:#505050;">Customer N...</div>
<svg class="b" style="left:31px;top:47px;overflow:visible" width="12" height="13" viewBox="0 0 12 13"><g fill="none" stroke="#3f78a8" stroke-width="1"><rect x="3.8" y="0.5" width="4" height="2.8" rx="1"/><path d="M5.8 3.3 V5.6 M2.6 5.6 H9 M2.6 5.6 V7.8 M9 5.6 V7.8"/><rect x="0.5" y="7.8" width="4.2" height="3.2" rx="1.2"/><rect x="6.9" y="7.8" width="4.2" height="3.2" rx="1.2"/></g></svg>
<div class="t" style="left:55.00px;top:46.87px;font-size:12.5px;color:#505050;">Location</div>
<svg class="b" style="left:30.5px;top:67px;overflow:visible" width="14" height="13" viewBox="0 0 14 13"><g fill="none" stroke="#3f78a8" stroke-width="1"><rect x="1" y="2.5" width="10" height="9"/><path d="M1 5.5 H11 M3.5 1.2 V3.5 M8.5 1.2 V3.5"/></g></svg>
<div class="t" style="left:55.00px;top:67.87px;font-size:12.5px;color:#505050;">Order Date</div>
<div class="t" style="left:29.00px;top:91.30px;font-size:9px;color:#3f78a8;">Abc</div>
<div class="t" style="left:55.00px;top:88.87px;font-size:12.5px;color:#505050;">Order ID</div>
<svg class="b" style="left:31px;top:110px;overflow:visible" width="12" height="13" viewBox="0 0 12 13"><g fill="none" stroke="#3f78a8" stroke-width="1"><rect x="3.8" y="0.5" width="4" height="2.8" rx="1"/><path d="M5.8 3.3 V5.6 M2.6 5.6 H9 M2.6 5.6 V7.8 M9 5.6 V7.8"/><rect x="0.5" y="7.8" width="4.2" height="3.2" rx="1.2"/><rect x="6.9" y="7.8" width="4.2" height="3.2" rx="1.2"/></g></svg>
<div class="t" style="left:55.00px;top:109.87px;font-size:12.5px;color:#505050;">Product</div>
<div class="t" style="left:44.00px;top:133.30px;font-size:9px;color:#3f78a8;">Abc</div>
<div class="t" style="left:70.00px;top:130.87px;font-size:12.5px;color:#505050;">Category</div>
<div class="t" style="left:44.00px;top:154.30px;font-size:9px;color:#3f78a8;">Abc</div>
<div class="t" style="left:70.00px;top:151.87px;font-size:12.5px;color:#505050;">Sub-Cate...</div>
<svg class="b" style="left:46px;top:171px;overflow:visible" width="12" height="14" viewBox="0 0 12 14"><path d="M3 9.5 L8 2.5 a1.8 1.8 0 0 1 3 2 L5 12 a2.5 2.5 0 0 1 -4 -3 L6.5 2" fill="none" stroke="#3f78a8" stroke-width="1" transform="rotate(-10 6 7)"/></svg>
<div class="t" style="left:70.00px;top:172.87px;font-size:12.5px;color:#505050;">Manufact...</div>
<div class="t" style="left:44.00px;top:196.30px;font-size:9px;color:#3f78a8;">Abc</div>
<div class="t" style="left:70.00px;top:193.87px;font-size:12.5px;color:#505050;">Product N...</div>
<svg class="b" style="left:29px;top:214px;overflow:visible" width="16" height="12" viewBox="0 0 16 12"><g fill="#3f78a8"><rect x="1" y="9" width="1.3" height="2"/><rect x="4" y="6" width="1.3" height="5"/><rect x="7" y="2" width="1.3" height="9"/><rect x="10" y="5" width="1.3" height="6"/><rect x="13" y="9" width="1.3" height="2"/></g></svg>
<div class="t" style="left:55.00px;top:214.87px;font-size:12.5px;color:#505050;">Profit (bin)</div>
<div class="t" style="left:29.00px;top:238.80px;font-size:9px;color:#3f78a8;">Abc</div>
<div class="t" style="left:55.00px;top:236.37px;font-size:12.5px;color:#505050;">Segment</div>
<svg class="b" style="left:30.5px;top:256.5px;overflow:visible" width="14" height="13" viewBox="0 0 14 13"><g fill="none" stroke="#3f78a8" stroke-width="1"><rect x="1" y="2.5" width="10" height="9"/><path d="M1 5.5 H11 M3.5 1.2 V3.5 M8.5 1.2 V3.5"/></g></svg>
<div class="t" style="left:55.00px;top:257.37px;font-size:12.5px;color:#505050;">Ship Date</div>
<div class="t" style="left:29.00px;top:280.80px;font-size:9px;color:#3f78a8;">Abc</div>
<div class="t" style="left:55.00px;top:278.37px;font-size:12.5px;color:#505050;">Ship Mode</div>
<svg class="b" style="left:29px;top:298px;overflow:visible" width="16" height="14" viewBox="0 0 16 14"><g fill="none" stroke="#3f78a8" stroke-width="1.1"><circle cx="5.5" cy="5.5" r="4.3"/><circle cx="9.5" cy="9" r="4.3"/></g></svg>
<div class="t" style="left:55.00px;top:299.87px;font-size:12.5px;color:#505050;">Top Custom...</div>
<svg class="b" style="left:31px;top:323.0px;overflow:visible" width="12" height="12" viewBox="0 0 12 12"><g stroke="#5aa2b6" stroke-width="1"><path d="M4.3 1 V10.5 M7.7 1 V10.5" opacity="0.75"/><path d="M1 4.3 H10 M1 7.5 H10" stroke-width="1.2"/></g></svg>
<div class="t" style="left:55.00px;top:323.37px;font-size:12.5px;color:#505050;">Discount</div>
<svg class="b" style="left:31px;top:344.0px;overflow:visible" width="12" height="12" viewBox="0 0 12 12"><g stroke="#5aa2b6" stroke-width="1"><path d="M4.3 1 V10.5 M7.7 1 V10.5" opacity="0.75"/><path d="M1 4.3 H10 M1 7.5 H10" stroke-width="1.2"/></g></svg>
<div class="t" style="left:55.00px;top:344.37px;font-size:12.5px;color:#505050;">Profit</div>
<svg class="b" style="left:31px;top:365.0px;overflow:visible" width="12" height="12" viewBox="0 0 12 12"><g stroke="#5aa2b6" stroke-width="1"><path d="M4.3 1 V10.5 M7.7 1 V10.5" opacity="0.75"/><path d="M1 4.3 H10 M1 7.5 H10" stroke-width="1.2"/></g></svg>
<div class="t" style="left:55.00px;top:365.37px;font-size:12.5px;color:#505050;">Quantity</div>
<svg class="b" style="left:31px;top:386.0px;overflow:visible" width="12" height="12" viewBox="0 0 12 12"><g stroke="#5aa2b6" stroke-width="1"><path d="M4.3 1 V10.5 M7.7 1 V10.5" opacity="0.75"/><path d="M1 4.3 H10 M1 7.5 H10" stroke-width="1.2"/></g></svg>
<div class="t" style="left:55.00px;top:386.37px;font-size:12.5px;color:#505050;">Sales</div>
<svg class="b" style="left:31px;top:407.0px;overflow:visible" width="12" height="12" viewBox="0 0 12 12"><g stroke="#5aa2b6" stroke-width="1"><path d="M4.3 1 V10.5 M7.7 1 V10.5" opacity="0.75"/><path d="M1 4.3 H10 M1 7.5 H10" stroke-width="1.2"/></g></svg>
<div class="t" style="left:55.00px;top:407.37px;font-size:12.5px;color:#505050;font-style:italic;">Orders (Cou...</div>
<svg class="b" style="left:17px;top:48px;overflow:visible" width="6" height="8" viewBox="0 0 6 8"><path d="M1 0.8 L4 3.8 L1 6.8" fill="none" stroke="#444" stroke-width="1.1"/></svg>
<svg class="b" style="left:15.5px;top:112px;overflow:visible" width="8" height="6" viewBox="0 0 8 6"><path d="M0.8 1 L3.8 4 L6.8 1" fill="none" stroke="#444" stroke-width="1.1"/></svg>
<div class="b" style="left:23px;top:317px;width:116px;height:1px;background:#dedede;"></div>
</div>
<div class="b" style="left:146px;top:181px;width:15.5px;height:414px;background:#efefef;"></div>
<div class="b" style="left:146px;top:198px;width:15px;height:217px;background:#cdcdcd;"></div>
<svg class="b" style="left:150px;top:188px;" width="9" height="6" viewBox="0 0 9 6"><path d="M1 4.5 L4 1.5 L7 4.5" fill="none" stroke="#444" stroke-width="1.1"/></svg>
<svg class="b" style="left:150px;top:584px;" width="9" height="6" viewBox="0 0 9 6"><path d="M1 1.3 L4 4.3 L7 1.3" fill="none" stroke="#444" stroke-width="1.1"/></svg>
<div class="b" style="left:0px;top:596px;width:162px;height:1px;background:#dcdcdc;"></div>
<div class="t" style="left:11.00px;top:601.80px;font-size:13px;color:#1a1a1a;-webkit-text-stroke:0.4px #1a1a1a;letter-spacing:0.5px;">Parameters</div>
<svg class="b" style="left:16px;top:626.5px;" width="12" height="12" viewBox="0 0 12 12"><g stroke="#5aa2b6" stroke-width="1"><path d="M4.3 1 V10.5 M7.7 1 V10.5" opacity="0.75"/><path d="M1 4.3 H10 M1 7.5 H10" stroke-width="1.2"/></g></svg>
<div class="t" style="left:40.00px;top:626.17px;font-size:12.5px;color:#505050;">Profit Bin Size</div>
<div class="t" style="left:14px;top:650.30px;font-size:9px;color:#3f78a8;">Abc</div>
<div class="t" style="left:40.00px;top:647.37px;font-size:12.5px;color:#505050;">Sorting List</div>
<div class="b" style="left:163px;top:42px;width:149px;height:622px;background:#f3f3f3;"></div>
<div class="b" style="left:169px;top:42px;width:137px;height:78px;background:#f8f8f8;border:1px solid #dedede;"></div>
<div class="t" style="left:176.40px;top:51.73px;font-size:12px;color:#555;">Filters</div>
<div class="b" style="left:174.4px;top:75.2px;width:126.2px;height:19.5px;background:#059467;border-radius:10px;"></div>
<div class="t" style="left:185.50px;top:78.73px;font-size:12px;color:#fff;-webkit-text-stroke:0.45px #fff;">Rank</div>
<svg class="b" style="left:278px;top:79px;" width="12" height="11" viewBox="0 0 12 11"><path d="M5.8 1.2 L10.6 9.8 H1 Z" fill="none" stroke="#fff" stroke-width="1.4" stroke-linejoin="miter"/></svg>
<div class="b" style="left:169px;top:126px;width:137px;height:219px;background:#f8f8f8;border:1px solid #dedede;"></div>
<div class="t" style="left:176.60px;top:136.13px;font-size:12px;color:#555;">Marks</div>
<div class="b" style="left:176px;top:162px;width:123px;height:21px;background:#f8f8f8;border:1px solid #d8d8d8;border-radius:2px;"></div>
<div class="b" style="left:280px;top:163px;width:1px;height:19px;background:#dcdcdc;"></div>
<svg class="b" style="left:286px;top:170px;" width="9" height="6" viewBox="0 0 9 6"><path d="M0.5 0.5 H7.5 L4 5 Z" fill="#555"/></svg>
<svg class="b" style="left:189px;top:165px;" width="11" height="13" viewBox="0 0 11 13"><g fill="#9a9a9a"><rect x="1" y="6" width="1.8" height="5.5"/><rect x="4.5" y="4" width="1.8" height="7.5"/><rect x="8" y="1.5" width="1.8" height="10"/></g></svg>
<div class="t" style="left:206.60px;top:167.23px;font-size:12px;color:#666;">Automatic</div>
<div class="b" style="left:176px;top:189px;width:37.5px;height:42px;background:#f8f8f8;border:1px solid #d6d6d6;"></div>
<div class="t" style="left:-5.25px;width:400px;text-align:center;top:218.76px;font-size:9.5px;color:#666;">Color</div>
<div class="b" style="left:219px;top:189px;width:37.5px;height:42px;background:#f8f8f8;border:1px solid #d6d6d6;"></div>
<div class="t" style="left:37.75px;width:400px;text-align:center;top:218.76px;font-size:9.5px;color:#666;">Size</div>
<div class="b" style="left:261.5px;top:189px;width:37.5px;height:42px;background:#f8f8f8;border:1px solid #d6d6d6;"></div>
<div class="t" style="left:80.25px;width:400px;text-align:center;top:218.76px;font-size:9.5px;color:#666;">Label</div>
<div class="b" style="left:176px;top:237.5px;width:37.5px;height:42px;background:#f8f8f8;border:1px solid #d6d6d6;"></div>
<div class="t" style="left:-5.25px;width:400px;text-align:center;top:267.26px;font-size:9.5px;color:#666;">Detail</div>
<div class="b" style="left:219px;top:237.5px;width:37.5px;height:42px;background:#f8f8f8;border:1px solid #d6d6d6;"></div>
<div class="t" style="left:37.75px;width:400px;text-align:center;top:267.26px;font-size:9.5px;color:#666;">Tooltip</div>
<svg class="b" style="left:187px;top:197px;" width="14" height="14" viewBox="0 0 14 14"><circle cx="3" cy="3" r="2.6" fill="#6b6b6b"/><circle cx="10" cy="3" r="2.6" fill="#d6708e"/><circle cx="3" cy="10" r="2.6" fill="#f7a389"/><circle cx="10" cy="10" r="2.6" fill="#7b9fbf"/></svg>
<svg class="b" style="left:229px;top:196px;" width="16" height="16" viewBox="0 0 16 16"><circle cx="9.5" cy="6.5" r="5.3" fill="none" stroke="#555" stroke-width="1"/><circle cx="4.5" cy="11.5" r="3.3" fill="#f8f8f8" stroke="#555" stroke-width="1"/></svg>
<svg class="b" style="left:272px;top:198px;" width="16" height="14" viewBox="0 0 16 14"><rect x="0.5" y="0.5" width="14" height="12" fill="none" stroke="#555" stroke-width="1.1"/><text x="7.5" y="10.3" font-family="Liberation Serif" font-size="10" text-anchor="middle" fill="#444">T</text></svg>
<svg class="b" style="left:186px;top:246px;" width="18" height="14" viewBox="0 0 18 14"><circle cx="9" cy="2.5" r="2.2" fill="#555"/><g fill="none" stroke="#555" stroke-width="0.9"><circle cx="3" cy="9.5" r="2.2"/><circle cx="9" cy="9.5" r="2.2"/><circle cx="15" cy="9.5" r="2.2"/></g></svg>
<svg class="b" style="left:229px;top:245px;" width="17" height="17" viewBox="0 0 17 17"><path d="M1 1 H15 V10.5 H9 L7.5 13.5 L6 10.5 H1 Z" fill="none" stroke="#555" stroke-width="1.1" stroke-linejoin="round"/></svg>
<svg class="b" style="left:183px;top:293px;" width="14" height="14" viewBox="0 0 14 14"><circle cx="3" cy="3" r="2.4" fill="#9b6f88"/><circle cx="10" cy="3" r="2.4" fill="#e07b98"/><circle cx="3" cy="10" r="2.4" fill="#f9b186"/><circle cx="10" cy="10" r="2.4" fill="#9ab8cf"/></svg>
<div class="b" style="left:201.6px;top:288.8px;width:93px;height:20.2px;background:#4893b3;border-radius:10px;"></div>
<svg class="b" style="left:212px;top:293px;" width="12" height="12" viewBox="0 0 12 12"><rect x="0.8" y="0.8" width="9.6" height="9.6" fill="none" stroke="#fff" stroke-width="1.3"/><path d="M5.6 3 V8.2 M3 5.6 H8.2" stroke="#fff" stroke-width="1.4"/></svg>
<div class="t" style="left:228.50px;top:292.57px;font-size:12.5px;color:#fff;-webkit-text-stroke:0.45px #fff;">Sub-Cat..</div>
<svg class="b" style="left:277px;top:99px;" width="16" height="34" viewBox="0 0 16 34"><path d="M8 0.8 L15 15.5 L1.5 15.5 Z" fill="#861521"/><path d="M7 14 H9.6 L10 32.5 H7.5 Z" fill="#861521"/></svg>
<div class="b" style="left:169px;top:351px;width:137px;height:75px;background:#fff;border:1px solid #dedede;"></div>
<div class="b" style="left:170px;top:352px;width:135px;height:29px;background:#f6f6f6;"></div>
<div class="t" style="left:176.70px;top:361.43px;font-size:12px;color:#555;">AGG(Rank)</div>
<div class="t" style="left:176.50px;top:389.43px;font-size:12px;color:#333;">1</div>
<div class="t" style="left:290.60px;top:389.43px;font-size:12px;color:#333;">8</div>
<svg class="b" style="left:174px;top:405px;" width="122" height="14" viewBox="0 0 122 14"><rect x="9" y="5.5" width="110" height="3" fill="#e6e6e6"/><rect x="5" y="5.3" width="55" height="3.4" fill="#a39c99"/><path d="M8.8 1.8 H5 a4.3 5.2 0 0 0 0 10.4 H8.8 Z" fill="#fff" stroke="#555" stroke-width="1"/><path d="M56.5 1.8 H60 a4.6 5.2 0 0 1 0 10.4 H56.5 Z" fill="#fff" stroke="#555" stroke-width="1"/></svg>
<div class="b" style="left:156px;top:348px;width:159px;height:83px;border:2px solid #8b1a26;"></div>
<div class="b" style="left:169px;top:433px;width:137px;height:192px;background:#fff;border:1px solid #dedede;"></div>
<div class="b" style="left:170px;top:434px;width:135px;height:28px;background:#f6f6f6;"></div>
<div class="t" style="left:176.60px;top:442.27px;font-size:12.5px;color:#555;">Sub-Category</div>
<div class="b" style="left:173px;top:465.8px;width:14px;height:13.5px;background:#4e79a7;"></div>
<div class="t" style="left:192.90px;top:468.27px;font-size:12.5px;color:#3a3a3a;">Accessories</div>
<div class="b" style="left:173px;top:485.8px;width:14px;height:13.5px;background:#ffbe7d;"></div>
<div class="t" style="left:192.90px;top:488.27px;font-size:12.5px;color:#3a3a3a;">Binders</div>
<div class="b" style="left:173px;top:505.8px;width:14px;height:13.5px;background:#8cd17d;"></div>
<div class="t" style="left:192.90px;top:508.27px;font-size:12.5px;color:#3a3a3a;">Chairs</div>
<div class="b" style="left:173px;top:525.8px;width:14px;height:13.5px;background:#b6992d;"></div>
<div class="t" style="left:192.90px;top:528.27px;font-size:12.5px;color:#3a3a3a;">Copiers</div>
<div class="b" style="left:173px;top:545.8px;width:14px;height:13.5px;background:#ff9d9a;"></div>
<div class="t" style="left:192.90px;top:548.27px;font-size:12.5px;color:#3a3a3a;">Machines</div>
<div class="b" style="left:173px;top:565.8px;width:14px;height:13.5px;background:#bab0ac;"></div>
<div class="t" style="left:192.90px;top:568.27px;font-size:12.5px;color:#3a3a3a;">Phones</div>
<div class="b" style="left:173px;top:585.8px;width:14px;height:13.5px;background:#d37295;"></div>
<div class="t" style="left:192.90px;top:588.27px;font-size:12.5px;color:#3a3a3a;">Storage</div>
<div class="b" style="left:173px;top:605.8px;width:14px;height:13.5px;background:#b07aa1;"></div>
<div class="t" style="left:192.90px;top:608.27px;font-size:12.5px;color:#3a3a3a;">Tables</div>
<div class="b" style="left:312px;top:42px;width:712px;height:28px;background:#fff;border:1px solid #dcdcdc;"></div>
<div class="b" style="left:313px;top:43px;width:124px;height:26px;background:#f8f8f8;border-right:1px solid #dcdcdc;"></div>
<div class="t" style="left:338.30px;top:50.12px;font-size:12.5px;color:#555;">Columns</div>
<div class="b" style="left:440.3px;top:45.8px;width:149.2px;height:20px;background:#0fb07d;border-radius:10px;"></div>
<div class="t" style="left:451.60px;top:49.67px;font-size:12.5px;color:#fff;-webkit-text-stroke:0.45px #fff;">SUM(Sales)</div>
<div class="b" style="left:312px;top:76px;width:712px;height:28px;background:#fff;border:1px solid #dcdcdc;"></div>
<div class="b" style="left:313px;top:77px;width:124px;height:26px;background:#f8f8f8;border-right:1px solid #dcdcdc;"></div>
<div class="t" style="left:338.30px;top:84.12px;font-size:12.5px;color:#555;">Rows</div>
<div class="b" style="left:440.3px;top:79.8px;width:149.2px;height:20px;background:#4893b3;border-radius:10px;"></div>
<div class="t" style="left:451.60px;top:83.67px;font-size:12.5px;color:#fff;-webkit-text-stroke:0.45px #fff;">Segment</div>
<div class="b" style="left:592px;top:79.8px;width:147.5px;height:20px;background:#4893b3;border-radius:10px;"></div>
<div class="t" style="left:602.00px;top:83.73px;font-size:12px;color:#fff;-webkit-text-stroke:0.45px #fff;">Rank</div>
<div class="b" style="left:742px;top:79.8px;width:148.5px;height:20px;background:#4893b3;border-radius:10px;"></div>
<div class="t" style="left:769.50px;top:83.67px;font-size:12.5px;color:#fff;-webkit-text-stroke:0.45px #fff;">Sub-Category</div>
<svg class="b" style="left:319px;top:49px;" width="12" height="12" viewBox="0 0 12 12"><g fill="#555"><rect x="0.5" y="0" width="2.2" height="2"/><rect x="4.5" y="0" width="2.2" height="2"/><rect x="8.5" y="0" width="2.2" height="2"/><rect x="0.5" y="3.5" width="2.2" height="7.5"/><rect x="4.5" y="3.5" width="2.2" height="7.5"/><rect x="8.5" y="3.5" width="2.2" height="7.5"/></g></svg>
<svg class="b" style="left:318px;top:83px;" width="14" height="12" viewBox="0 0 14 12"><g fill="#555"><rect x="0.5" y="1" width="2" height="2"/><rect x="0.5" y="5" width="2" height="2"/><rect x="0.5" y="9" width="2" height="2"/><rect x="4" y="1" width="9" height="1.8"/><rect x="4" y="5" width="9" height="1.8"/><rect x="4" y="9" width="9" height="1.8"/></g></svg>
<svg class="b" style="left:717px;top:84px;" width="12" height="11" viewBox="0 0 12 11"><path d="M5.8 1.2 L10.6 9.8 H1 Z" fill="none" stroke="#fff" stroke-width="1.4"/></svg>
<svg class="b" style="left:754px;top:84px;" width="12" height="12" viewBox="0 0 12 12"><rect x="0.8" y="0.8" width="9.6" height="9.6" fill="none" stroke="#fff" stroke-width="1.3"/><path d="M5.6 3 V8.2 M3 5.6 H8.2" stroke="#fff" stroke-width="1.4"/></svg>
<svg class="b" style="left:867px;top:84px;" width="14" height="12" viewBox="0 0 14 12"><g fill="#fff"><rect x="0.5" y="0.5" width="12" height="2.2"/><rect x="0.5" y="4.6" width="8" height="2.2"/><rect x="0.5" y="8.7" width="4" height="2.2"/></g></svg>
</body></html>
